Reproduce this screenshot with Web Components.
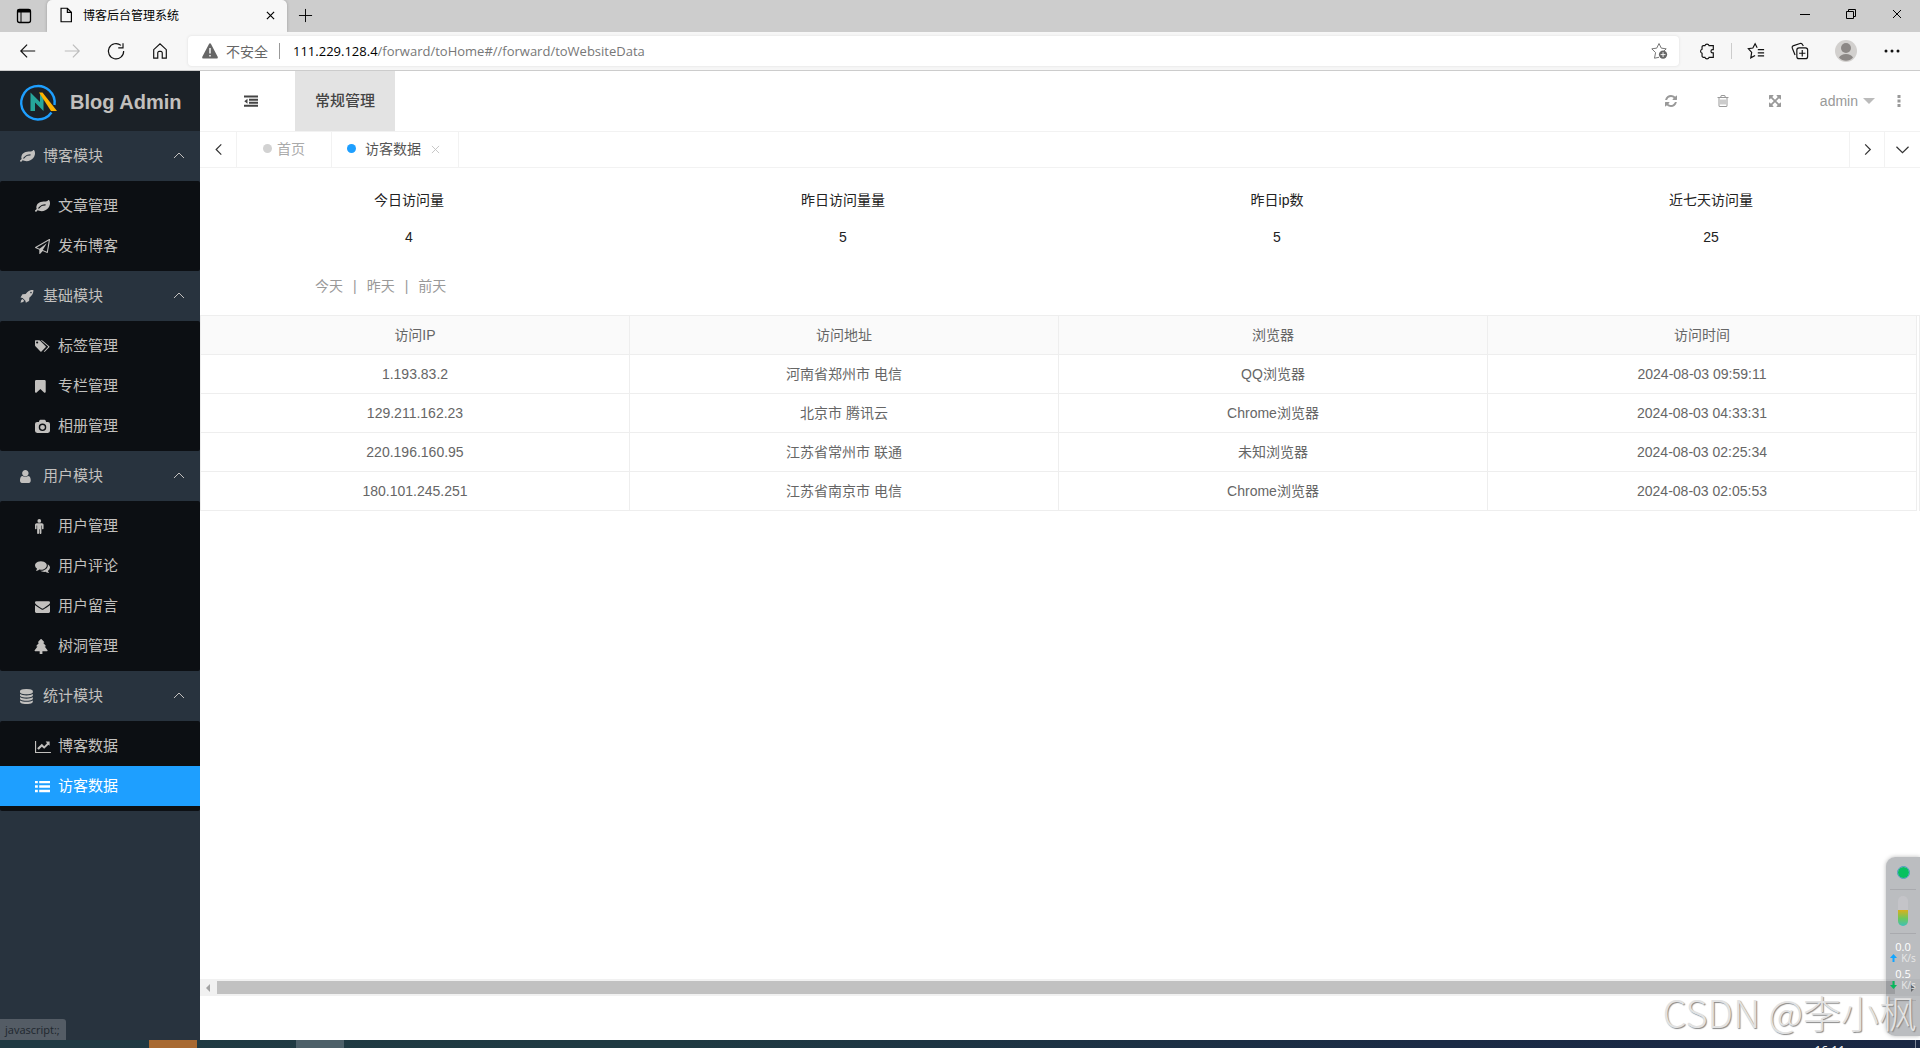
<!DOCTYPE html>
<html lang="zh-CN">
<head>
<meta charset="utf-8">
<title>博客后台管理系统</title>
<style>
html,body{margin:0;height:100%}
body{font-family:"Liberation Sans","Noto Sans CJK SC",sans-serif;font-size:14px;line-height:24px;color:#333;overflow:hidden;background:#fff}
</style>
</head>
<body>
<desk-screen>
  <browser-bar slot="browser"></browser-bar>
  <side-nav slot="nav">
    <nav-group icon="leaf" label="博客模块">
      <nav-item icon="leaf">文章管理</nav-item>
      <nav-item icon="plane">发布博客</nav-item>
    </nav-group>
    <nav-group icon="rocket" label="基础模块">
      <nav-item icon="tags">标签管理</nav-item>
      <nav-item icon="bookmark">专栏管理</nav-item>
      <nav-item icon="camera">相册管理</nav-item>
    </nav-group>
    <nav-group icon="user" label="用户模块">
      <nav-item icon="male">用户管理</nav-item>
      <nav-item icon="comments">用户评论</nav-item>
      <nav-item icon="envelope">用户留言</nav-item>
      <nav-item icon="tree">树洞管理</nav-item>
    </nav-group>
    <nav-group icon="database" label="统计模块">
      <nav-item icon="chart">博客数据</nav-item>
      <nav-item icon="list" active>访客数据</nav-item>
    </nav-group>
  </side-nav>
  <app-header slot="header"></app-header>
  <page-tabs slot="tabs"></page-tabs>
  <stat-row slot="content">
    <stat-card label="今日访问量">4</stat-card>
    <stat-card label="昨日访问量量">5</stat-card>
    <stat-card label="昨日ip数">5</stat-card>
    <stat-card label="近七天访问量">25</stat-card>
  </stat-row>
  <day-filter slot="content"></day-filter>
  <visit-table slot="content"></visit-table>
  <scroll-strip slot="scroll"></scroll-strip>
  <task-bar slot="taskbar"></task-bar>
</desk-screen>
<script>
const ICONS = {
leaf:['0 0 1792 1792','<path d="M1280 704q0-26-19-45t-45-19q-172 0-318 49.5t-259.5 134-235.5 219.5q-19 21-19 45 0 26 19 45t45 19q24 0 45-19 27-24 74-71t67-66q137-124 268.5-176t313.5-52q26 0 45-19t19-45zm512-198q0 95-20 193-46 224-184.5 383t-357.5 268q-214 108-438 108-148 0-286-47-15-5-88-42t-96-37q-16 0-39.5 32t-45 70-52.5 70-60 32q-43 0-63.5-17.5t-45.5-59.5q-2-4-6-11t-5.5-10-3-9.5-1.5-13.5q0-35 31-73.5t68-65.5 68-56 31-48q0-4-14-38t-16-44q-9-51-9-104 0-115 43.5-220t119-184.5 170.5-139 204-95.5q55-18 145-25.5t179.5-9 178.5-6 163.5-24 113.5-56.5l29.5-29.5 29.5-28 27-20 36.5-16 43.5-4.5q39 0 70.5 46t47.5 112 24 124 8 96z"/>'],
plane:['0 0 1792 1792','<path fill-rule="evenodd" d="M1764 11q33 24 27 64l-256 1536q-5 29-32 45-14 8-31 8-11 0-24-5l-527-215-298 327q-18 21-47 21-14 0-23-4-19-7-30-23.500t-11-36.500v-452l-472-193q-37-14-40-55-3-39 32-59l1664-960q35-21 68 2zM1422 1513L1643 187 205 1016l337 138 863-639-478 797z"/>'],
rocket:['128 0 1792 1792','<path fill-rule="evenodd" d="M1730 130c-300-14-540 60-740 260L800 600l-340 20q-24 2-40 22L190 1010l250 60 330 330 60 250 370-230q20-14 22-40l20-340 210-190c200-200 292-420 278-720zM1440 528a96 96 0 1 1 0-192 96 96 0 0 1 0 192zM420 1200q-160 40-230 440 400-70 440-230z"/>'],
tags:['128 0 1792 1792','<path fill-rule="evenodd" d="M180 160h450q60 0 120 50l650 650q60 60 0 124l-500 510q-64 50-124 0L180 860q-50-60-50-120V260q0-90 50-100zM384 540a128 128 0 1 0 0-256 128 128 0 0 0 0 256z"/><path d="M820 160h120q60 0 110 50l780 650q70 60 0 124l-500 510q-80 60-150-10l480-490q60-70 0-134z"/>'],
bookmark:['256 0 1792 1792','<path d="M1420 128q23 0 44 9 33 13 52.500 41t19.500 62v1289q0 34-19.500 62t-52.500 41q-19 8-44 8-48 0-83-32l-441-424-441 424q-36 33-83 33-23 0-44-9-33-13-52.500-41t-19.500-62v-1289q0-34 19.500-62t52.500-41q21-9 44-9h1048z"/>'],
camera:['0 0 1792 1792','<path fill-rule="evenodd" d="M256 350h200l60-150q30-90 130-106h500q100 16 130 106l60 150h200q256 0 256 256v802q0 256-256 256H256Q0 1664 0 1408V606q0-256 256-256zm640 202a448 448 0 1 0 0 896 448 448 0 0 0 0-896zm0 160a288 288 0 1 1 0 576 288 288 0 0 1 0-576z"/>'],
user:['256 0 1792 1792','<path d="M1536 1399q0 109-62.500 187t-150.500 78h-854q-88 0-150.500-78t-62.500-187q0-85 8.500-160.500t31.500-152 58.500-131 94-89 134.500-34.500q131 128 313 128t313-128q76 0 134.500 34.500t94 89 58.500 131 31.500 152 8.500 160.500zm-256-887q0 159-112.500 271.500t-271.500 112.500-271.500-112.500-112.500-271.500 112.500-271.500 271.500-112.500 271.500 112.500 112.500 271.500z"/>'],
male:['384 0 1792 1792','<path d="M1408 704v416q0 40-28 68t-68 28-68-28-28-68V768h-64v912q0 46-33 79t-79 33-79-33-33-79v-464h-64v464q0 46-33 79t-79 33-79-33-33-79V768h-64v352q0 40-28 68t-68 28-68-28-28-68V704q0-80 56-136t136-56h640q80 0 136 56t56 136zM1120 224a224 224 0 1 1-448 0 224 224 0 0 1 448 0z"/>'],
comments:['0 0 1792 1792','<path d="M1408 768q0 139-94 257t-256.500 186.500T704 1280q-86 0-176-16-124 88-278 128-36 9-86 16-32 0-38-36-2-18 34-52 50-46 90-154Q0 1000 0 768q0-139 94-257t256.500-186.500T704 256t353.500 68.500T1314 511t94 257zm384 256q0 232-250 410 40 100 90 146 36 34 34 52-10 36-42 34-46-4-82-14-154-40-278-128-90 16-176 16-271 0-472-132 58 4 88 4 161 0 309-45t264-129q125-92 192-212t67-254q0-77-23-152 129 71 204 178t75 226z"/>'],
envelope:['0 0 1792 1792','<path d="M1792 710v794q0 66-47 113t-113 47H160q-66 0-113-47T0 1504V710q44 49 101 87 362 246 497 345 57 42 92.500 65.500t94.500 48 110 24.500h2q51 0 110-24.500t94.500-48T1194 1142q170-123 498-345 57-39 100-87zm0-294q0 79-49 151t-122 123q-376 261-468 325-10 7-42.500 30.500t-54 38-52 32.500-57.500 27-50 9h-2q-23 0-50-9t-57.500-27-52-32.500-54-38T639 1015Q548 951 377 832.500T172 690q-62-42-117-115.500T0 438q0-78 41.500-130T160 256h1472q65 0 112.500 47t47.500 113z"/>'],
tree:['170 0 1792 1792','<path d="M896 0q40 0 70 30l300 340q40 60-40 80h-90l320 370q40 70-40 90h-90l340 430q50 90-50 110h-560v300q0 42-42 42H770q-42 0-42-42v-300H180q-100-20-50-110l340-430h-90q-80-20-40-90l320-370h-90q-80-20-40-80L826 30q30-30 70-30z"/>'],
database:['128 0 1792 1792','<path d="M896 768q237 0 443-43t325-127v170q0 69-103 128t-280 93.500-385 34.500-385-34.500-280-93.500-103-128v-170q119 84 325 127t443 43zm0 768q237 0 443-43t325-127v170q0 69-103 128t-280 93.500-385 34.500-385-34.500-280-93.500-103-128v-170q119 84 325 127t443 43zm0-384q237 0 443-43t325-127v170q0 69-103 128t-280 93.500-385 34.500-385-34.500-280-93.500-103-128v-170q119 84 325 127t443 43zm0-1152q208 0 385 34.500t280 93.500 103 128v128q0 69-103 128t-280 93.500-385 34.500-385-34.500-280-93.500-103-128v-128q0-69 103-128t280-93.500 385-34.500z"/>'],
chart:['0 0 16 16','<path d="M0 2h1.200v11.800H17V15H0zM15.600 2.600v4.600L14.300 6 9.800 10.500 7.300 8.200 4 11.500 2.300 9.800l5-4.700L9.800 7.600l3-3L11.400 2.600z"/>'],
list:['0 0 16 16','<path d="M0 2h3v2.600H0zm4.500 0H16v2.600H4.500zM0 6.700h3v2.600H0zm4.500 0H16v2.600H4.500zM0 11.400h3V14H0zm4.500 0H16V14H4.500z"/>'],
dedent:['0 0 14 14','<path d="M0 1.500h14v2H0zM5 4.700h9v2H5zM5 7.700h9v2H5zM0 10.700h14v2H0zM3.500 4.700v5L.3 7.200z"/>'],
refresh:['0 0 1792 1792','<path d="M1639 1056q0 5-1 7-64 268-268 434.500t-478 166.500q-146 0-282.500-55t-243.500-157l-129 129q-19 19-45 19t-45-19-19-45v-448q0-26 19-45t45-19h448q26 0 45 19t19 45-19 45l-137 137q71 66 161 102t187 36q134 0 250-65t186-179q11-17 53-117 8-23 30-23h192q13 0 22.500 9.500t9.500 22.500zm25-800v448q0 26-19 45t-45 19h-448q-26 0-45-19t-19-45 19-45l138-138q-148-137-349-137-134 0-250 65t-186 179q-11 17-53 117-8 23-30 23h-199q-13 0-22.500-9.500t-9.500-22.500v-7q65-268 270-434.500t480-166.500q146 0 284 55.500t245 156.500l130-129q19-19 45-19t45 19 19 45z"/>'],
trash:['0 0 1792 1792','<path d="M704 736v576q0 14-9 23t-23 9h-64q-14 0-23-9t-9-23v-576q0-14 9-23t23-9h64q14 0 23 9t9 23zm256 0v576q0 14-9 23t-23 9h-64q-14 0-23-9t-9-23v-576q0-14 9-23t23-9h64q14 0 23 9t9 23zm256 0v576q0 14-9 23t-23 9h-64q-14 0-23-9t-9-23v-576q0-14 9-23t23-9h64q14 0 23 9t9 23zm128 724v-948h-896v948q0 22 7 40.500t14.500 27 10.500 8.500h832q3 0 10.500-8.500t14.500-27 7-40.500zm-672-1076h448l-48-117q-7-9-17-11h-317q-10 2-17 11zm928 32v64q0 14-9 23t-23 9h-96v948q0 83-47 143.500t-113 60.500h-832q-66 0-113-58.500t-47-141.500v-952h-96q-14 0-23-9t-9-23v-64q0-14 9-23t23-9h309l70-167q15-37 54-63t79-26h320q40 0 79 26t54 63l70 167h309q14 0 23 9t9 23z"/>'],
expand:['0 0 1792 1792','<path d="M1411 541l-355 355 355 355 144-144q29-31 70-14 39 17 39 59v448q0 26-19 45t-45 19h-448q-42 0-59-40-17-39 14-69l144-144-355-355-355 355 144 144q31 30 14 69-17 40-59 40h-448q-26 0-45-19t-19-45v-448q0-42 40-59 39-17 69 14l144 144 355-355-355-355-144 144q-19 19-45 19-12 0-24-5-40-17-40-59v-448q0-26 19-45t45-19h448q42 0 59 40 17 39-14 69l-144 144 355 355 355-355-144-144q-31-30-14-69 17-40 59-40h448q26 0 45 19t19 45v448q0 42-39 59-13 5-25 5-26 0-45-19z"/>'],
more:['0 0 12 12','<path d="M4.500 0h3v3h-3zm0 4.500h3v3h-3zm0 4.500h3v3h-3z"/>'],
up:['0 0 12 12','<path class="l" d="M1 8l5-5 5 5"/>'],
left:['0 0 14 14','<path class="b" d="M10 1.500L4.500 7l5.500 5.500"/>'],
right:['0 0 14 14','<path class="b" d="M4.500 1.500L10 7l-5.500 5.500"/>'],
down:['0 0 14 14','<path class="b" d="M.5 4L7 10.500 13.500 4"/>'],
close:['0 0 10 10','<path class="l" d="M1 1l8 8M9 1L1 9"/>'],
closeBold:['0 0 10 10','<path class="b" d="M1 1l8 8M9 1L1 9"/>'],
win:['0 0 20 20','<rect class="b" x="3.500" y="3.500" width="13" height="13" rx="2"/><path d="M3.500 3.500h13v3h-13z"/><path class="l" d="M7 6v10"/>'],
file:['0 0 20 20','<path class="b" d="M4.500 2.500h7l4.500 4.500v10.500h-11.500zM11.500 2.500V7H16"/>'],
plus:['0 0 16 16','<path class="l" d="M8 1v14M1 8h14"/>'],
back:['0 0 20 20','<path class="b" d="M18 10H2M9 3L2 10l7 7"/>'],
forward:['0 0 20 20','<path class="b" d="M2 10h16M11 3l7 7-7 7"/>'],
reload:['0 0 20 20','<path class="b" d="M18.500 10A8.500 8.500 0 1 1 15.500 3.800M17.800 1.500v5H12.500"/>'],
home:['0 0 20 20','<path class="b" d="M3 18V8.500L10 2l7 6.500V18h-4.500V12a1.500 1.500 0 0 0-1.500-1.500H9A1.500 1.500 0 0 0 7.500 12v6z"/>'],
warn:['0 0 16 16','<path fill-rule="evenodd" d="M8 .3q.7 0 1 .6l6.800 13q.4 1.500-1 1.600H1.200q-1.400-.1-1-1.600l6.800-13q.3-.6 1-.6zM7.300 5v5.500h1.400V5zm0 7v1.600h1.400V12z"/>'],
starplus:['0 0 20 20','<path class="l" d="M10 17l-5 1 1.200-6.200L2 7.600l5.500-.8L10 1.700l2.500 5.100 5.500.8-3 2.900"/><circle cx="14.500" cy="14" r="4.600"/><path stroke="#fff" d="M14.500 11.300v5.400M11.800 14h5.400"/>'],
puzzle:['0 0 20 20','<path class="b" d="M6 4h1.700a2.400 2.400 0 0 1 4.600 0H17v4.500h-.8a1.800 1.800 0 0 0 0 3.600h.8V17h-4.700a2.400 2.400 0 0 1-4.600 0H6a1.500 1.500 0 0 1-1.500-1.500V12.500a2.300 2.300 0 0 1 0-4.400V5.500A1.500 1.500 0 0 1 6 4z"/>'],
favs:['0 0 20 20','<path class="b" d="M9 15l-4.800 2.600 1-6L1.500 7.500l5-.8L9 2l2.300 4.500M12 8.500h7M12 12h7M12 15.500h7"/>'],
coll:['0 0 20 20','<rect class="b" x="6.500" y="6.500" width="12" height="12" rx="2.500"/><path class="b" d="M12.500 9v7M9 12.500h7M4.500 14.500L1.500 7q-.8-2.300 1.500-3l7-2.300q2-.6 2.900 1.300l.8 1.500"/>'],
dots:['0 0 20 20','<circle cx="4" cy="10" r="1.500"/><circle cx="10" cy="10" r="1.500"/><circle cx="16" cy="10" r="1.500"/>'],
avatar:['0 0 22 22','<circle cx="11" cy="11" r="11" fill="#d2d0ce"/><circle cx="11" cy="8" r="5" fill="#8c8886"/><path d="M4 17.500q2-3.500 7-3.500t7 3.500q-3 3.300-7 3.300t-7-3.300z" fill="#8c8886"/>'],
min:['0 0 10 10','<path class="l" d="M0 5.500h10"/>'],
restore:['0 0 10 10','<path class="l" d="M.5 2.500h7v7h-7zM2.500 2.500v-2h7v7h-2"/>'],
logo:['0 0 38 38','<path d="M31.500 29.500A16.700 16.700 0 1 1 34.500 22" fill="none" stroke="#1e9fff" stroke-width="2.400"/><path d="M10.500 9.500L20 19v-8.500l3.500 4V28L15 19.500V28h-4.500z" fill="#26a69a"/><path d="M19 9.500h3.500L37 28h-6z" fill="#ffb300"/>']
};
function define(name, css, html, setup){
  const t = document.createElement('template');
  t.innerHTML = '<style>:host{display:block;box-sizing:border-box}*{box-sizing:border-box}button{border:0;background:none;padding:0;margin:0;font:inherit;color:inherit;display:flex;align-items:center;justify-content:center}a{color:inherit;text-decoration:none}' + css + '</style>' + html;
  customElements.define(name, class extends HTMLElement{
    constructor(){
      super();
      this.attachShadow({mode:'open'}).append(t.content.cloneNode(true));
    }
    connectedCallback(){ if(setup) setup(this, this.shadowRoot); }
  });
}
define('ui-icon', ':host{display:block;flex:none;width:var(--s,15px);height:var(--s,15px)}svg{display:block;width:100%;height:100%;fill:currentColor;overflow:visible}.l{fill:none;stroke:currentColor;stroke-width:1}.b{fill:none;stroke:currentColor;stroke-width:1.300}', '<svg aria-hidden="true"></svg>', (el, r) => {
  const icon = ICONS[el.getAttribute('name')];
  if(!icon) return;
  const s = r.querySelector('svg');
  s.setAttribute('viewBox', icon[0]);
  s.innerHTML = icon[1];
});
define('desk-screen', ':host{display:flex;flex-direction:column;height:100vh}.mid{flex:1;display:flex;min-height:0;position:relative}.main{flex:1;display:flex;flex-direction:column;min-width:0;overflow:hidden}.view{flex:1;min-height:0}.foot{height:44px}.status{position:absolute;left:0;bottom:0;height:21px;padding:0 6px 0 5px;background:#545c65;color:#20272e;font:11px/21px "Open Sans",sans-serif;border-radius:0 3px 0 0}net-meter{position:absolute;right:0;bottom:4px}.mark{position:absolute;right:3px;bottom:4px;font:300 38px/48px "Noto Sans CJK SC",sans-serif;color:#e2e2e2;text-shadow:1px 1px 1px #888;white-space:nowrap}',
`<slot name="browser"></slot>
<div class="mid"><slot name="nav"></slot>
<div class="main"><slot name="header"></slot><slot name="tabs"></slot><div class="view"><slot name="content"></slot></div><slot name="scroll"></slot><div class="foot"></div></div>
<div class="status">javascript:;</div><net-meter></net-meter><div class="mark">CSDN @李小枫</div></div>
<slot name="taskbar"></slot>`);
define('browser-bar', `.strip{display:flex;height:32px;background:#cdcdcd;color:#000}
.strip>button{width:47px}.tab{display:flex;align-items:center;width:240px;padding:0 12px 2px 10px;background:#f7f7f7;border-radius:5px 5px 0 0;box-shadow:0 0 3px #999;font:12px/16px "Noto Sans CJK SC",sans-serif;clip-path:inset(0 -4px 0 -4px)}
.tab span{flex:1;margin-left:8px}.tab ui-icon{--s:18px}.tab button ui-icon{--s:9px}
.strip .add{width:36px;padding-bottom:1px}.add ui-icon{--s:15px}.grow{flex:1}.strip .w{width:46px;padding-bottom:4px}.w ui-icon{--s:10px}
.tools{display:flex;align-items:center;height:39px;padding:0 6px;background:#f7f7f7;border-bottom:1px solid #ccc;color:#111}
.tools button{width:44px;height:30px}.tools ui-icon{--s:18px}.off{opacity:.25}
.addr{flex:1;display:flex;align-items:center;height:30px;margin:0 6px;padding-left:14px;background:#fff;border-radius:4px;box-shadow:0 0 3px #ddd;color:#666;font:14px/20px "Noto Sans CJK SC",sans-serif}
.addr>ui-icon{--s:16px}.addr>i{width:1px;height:16px;background:#999;margin:0 13px 0 11px}.safe{margin-left:8px}.url{flex:1;font-family:"Open Sans",sans-serif;font-size:13px;color:#777}.url b{font-weight:400;color:#000}
.addr button{width:40px}.sep{width:1px;height:16px;background:#ccc;margin:0 2px}.tools .me{margin:0 2px}.me ui-icon{--s:22px}`,
`<div class="strip"><button aria-label="标签页操作"><ui-icon name="win" style="--s:20px"></ui-icon></button>
<div class="tab"><ui-icon name="file"></ui-icon><span>博客后台管理系统</span><button aria-label="关闭标签页"><ui-icon name="closeBold"></ui-icon></button></div>
<button class="add" aria-label="新建标签页"><ui-icon name="plus"></ui-icon></button><div class="grow"></div>
<button class="w" aria-label="最小化"><ui-icon name="min"></ui-icon></button><button class="w" aria-label="还原"><ui-icon name="restore"></ui-icon></button><button class="w" aria-label="关闭"><ui-icon name="close"></ui-icon></button></div>
<div class="tools"><button aria-label="后退"><ui-icon name="back"></ui-icon></button><button class="off" aria-label="前进"><ui-icon name="forward"></ui-icon></button><button aria-label="刷新"><ui-icon name="reload"></ui-icon></button><button aria-label="主页"><ui-icon name="home"></ui-icon></button>
<div class="addr"><ui-icon name="warn"></ui-icon><span class="safe">不安全</span><i></i><div class="url" role="textbox" contenteditable="true" spellcheck="false" aria-label="地址"><b>111.229.128.4</b>/forward/toHome#//forward/toWebsiteData</div><button aria-label="收藏"><ui-icon name="starplus"></ui-icon></button></div>
<button aria-label="扩展"><ui-icon name="puzzle"></ui-icon></button><i class="sep"></i><button aria-label="收藏夹"><ui-icon name="favs"></ui-icon></button><button aria-label="集锦"><ui-icon name="coll"></ui-icon></button><button class="me" aria-label="个人资料"><ui-icon name="avatar"></ui-icon></button><button aria-label="设置"><ui-icon name="dots" style="--s:20px"></ui-icon></button></div>`);
define('side-nav', ':host{width:200px;background:#28333e;color:#c2c0be;font-size:15px}.logo{display:flex;align-items:center;height:60px;padding:2px 0 0 20px;background:#1b2127;font-size:20px;font-weight:700;gap:12px}.logo ui-icon{--s:38px}',
'<a class="logo" href="#"><ui-icon name="logo"></ui-icon>Blog Admin</a><nav><slot></slot></nav>');
define('nav-group', 'button{width:100%;height:50px;padding:0 15px 0 20px;justify-content:flex-start;text-align:left;gap:8px}span{flex:1}.up{--s:12px}.sub{background:#0c0f13;padding:5px 0;border-radius:2px}',
'<button aria-expanded="true"><span></span><ui-icon class="up" name="up"></ui-icon></button><div class="sub"><slot></slot></div>', (el, r) => {
  r.querySelector('button').prepend(makeIcon(el.getAttribute('icon')));
  r.querySelector('span').textContent = el.getAttribute('label');
});
define('nav-item', ':host([active]){background:#1e9fff;color:#fff}a{display:flex;align-items:center;gap:8px;height:40px;padding-left:35px}',
'<a href="#"><slot></slot></a>', (el, r) => r.querySelector('a').prepend(makeIcon(el.getAttribute('icon'))));
function makeIcon(name){ const i = document.createElement('ui-icon'); i.setAttribute('name', name); return i; }
define('app-header', ':host{display:flex;height:60px;padding:0 11px 0 0;color:#999}.fold{width:95px;padding-left:7px;color:#444}.fold ui-icon{--s:14px}.on{width:100px;background:#e3e3e3;color:#444;font-size:15px;font-weight:500}.grow{flex:1}.t{width:52px}.t ui-icon{--s:14px}.who{margin-left:19px;gap:5px}.who i{border:6px solid transparent;border-top-color:#bbb;border-bottom:0}.m{width:20px;margin-left:14px}.m ui-icon{--s:12px}',
'<button class="fold" aria-label="折叠菜单"><ui-icon name="dedent"></ui-icon></button><button class="on">常规管理</button><div class="grow"></div><button class="t" aria-label="刷新"><ui-icon name="refresh"></ui-icon></button><button class="t" aria-label="清除"><ui-icon name="trash"></ui-icon></button><button class="t" aria-label="全屏"><ui-icon name="expand"></ui-icon></button><button class="who">admin<i></i></button><button class="m" aria-label="更多"><ui-icon name="more"></ui-icon></button>');
define('page-tabs', ':host{display:flex;height:37px;border:1px solid #f2f2f2;border-width:1px 0;color:#aaa}button{border-right:1px solid #f2f2f2;color:#333}button ui-icon{--s:13px}.p{width:37px;padding-right:0}.tab{display:flex;align-items:center;border-right:1px solid #f2f2f2;padding:0 26px 2px;gap:5px}.tab i{width:9px;height:9px;border-radius:50%;background:#d2d2d2}.on{padding:0 18px 2px 15px;gap:9px;color:#555}.on i{background:#1e9fff}.on button{border:0;padding:2px 0 0 1px;color:#c2c2c2}.on button ui-icon{--s:9px}.grow{flex:1;border-right:1px solid #f2f2f2}.n{width:35px}.d{width:35px;border:0}',
'<button class="p" aria-label="向左"><ui-icon name="left"></ui-icon></button><div class="tab"><i></i><a href="#">首页</a></div><div class="tab on"><i></i><a href="#">访客数据</a><button aria-label="关闭"><ui-icon name="close"></ui-icon></button></div><div class="grow"></div><button class="n" aria-label="向右"><ui-icon name="right"></ui-icon></button><button class="d" aria-label="标签操作"><ui-icon name="down"></ui-icon></button>');
define('stat-row', ':host{display:grid;grid-template-columns:repeat(4,1fr);margin:0 -8px;padding-top:14px}', '<slot></slot>');
define('stat-card', ':host{text-align:center;color:#222}div{line-height:37px}', '<div class="k"></div><div><slot></slot></div>', (el, r) => r.querySelector('.k').textContent = el.getAttribute('label'));
define('day-filter', ':host{display:flex;gap:10px;padding:18px 0 17px 115px;color:#999}', '<a href="#">今天</a><span>|</span><a href="#">昨天</a><span>|</span><a href="#">前天</a>');
define('visit-table', ':host{border:1px solid #eee;border-bottom:0;padding-right:2px;color:#666}table{width:100%;table-layout:fixed;border-collapse:separate;border-spacing:0}th,td{height:39px;padding:0;text-align:center;font-weight:400;border:1px solid #eee;border-width:0 1px 1px 0}th{background:#fafafa;height:39px}',
`<table><thead><tr><th>访问IP</th><th>访问地址</th><th>浏览器</th><th>访问时间</th></tr></thead><tbody>
<tr><td>1.193.83.2</td><td>河南省郑州市 电信</td><td>QQ浏览器</td><td>2024-08-03 09:59:11</td></tr>
<tr><td>129.211.162.23</td><td>北京市 腾讯云</td><td>Chrome浏览器</td><td>2024-08-03 04:33:31</td></tr>
<tr><td>220.196.160.95</td><td>江苏省常州市 联通</td><td>未知浏览器</td><td>2024-08-03 02:25:34</td></tr>
<tr><td>180.101.245.251</td><td>江苏省南京市 电信</td><td>Chrome浏览器</td><td>2024-08-03 02:05:53</td></tr></tbody></table>`);
define('scroll-strip', ':host{display:flex;align-items:center;height:17px;background:#f1f1f1;padding:0 5px 0 6px}i{border:4px solid transparent;border-left:0;border-right-color:#a3a3a3}.bar{flex:1;height:13px;margin:0 16px 0 7px;background:#c1c1c1}.r{border-left:4px solid #505050;border-right:0}',
'<i></i><div class="bar"></div><i class="r"></i>');
define('net-meter', ':host{width:34px;height:179px;padding:0 4px;background:rgba(120,123,130,.5);border-radius:9px 0 0 9px;box-shadow:0 0 4px #bbb;display:flex;flex-direction:column;align-items:center;color:#fff;font:11px/12px "Open Sans",sans-serif}.dot{width:11px;height:11px;margin:10px 0 11px;border-radius:50%;background:#07c160;outline:1px solid #4a9ec0}hr{width:100%;margin:0;border:0;border-top:1px solid #a9aaae}.g{width:10px;height:30px;margin:6px 0 7px;border-radius:5px;background:linear-gradient(#c4c4c8 47%,#d9b01c 47%,#6cc85c 75%,#3fc0b8)}.v{margin-top:7px}.v+.u+.v{margin-top:5px}.u{display:flex;align-items:center;gap:4px;color:#e8e8e8;font-size:10px;line-height:10px}svg{width:7px;height:8px}hr:last-child{margin-top:10px}',
'<i class="dot"></i><hr><i class="g"></i><hr><div class="v">0.0</div><div class="u"><svg viewBox="0 0 7 8"><path fill="#12a5ff" d="M3.500 0L7 4H4.500v4h-2V4H0z"/></svg>K/s</div><div class="v">0.5</div><div class="u"><svg viewBox="0 0 7 8"><path fill="#07b85c" d="M3.500 8L0 4h2.500V0h2v4H7z"/></svg>K/s</div><hr>');
define('task-bar', ':host{display:flex;height:8px;overflow:hidden;background:linear-gradient(90deg,#203a43,#1f3a42 35%,#1b2b45 75%,#192743);color:#fff;font:12px/16px "Open Sans",sans-serif}i{width:48px;background:#a86a32;margin-left:149px}i+i{background:#4d6069;margin-left:99px}time{margin:3px 70px 0 auto}.edge{width:1px;background:#7d8697;margin:0 4px 0 0}time+.edge{margin-left:0}',
'<i></i><i></i><time>16:11</time><span class="edge"></span>');
</script>
</body>
</html>
